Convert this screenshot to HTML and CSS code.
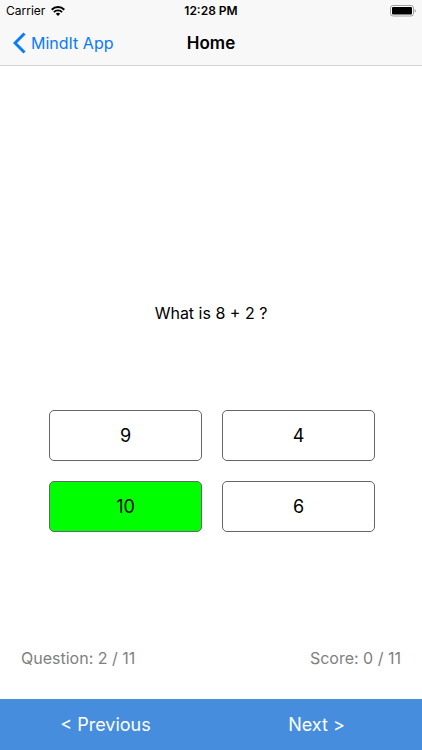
FILE: index.html
```html
<!DOCTYPE html>
<html lang="en">
<head>
<meta charset="utf-8">
<meta name="viewport" content="width=device-width, initial-scale=1">
<title>Home</title>
<link rel="stylesheet" href="styles.css">
</head>
<body>
<header class="top">
  <div class="status">
    <div class="carrier">
      <span>Carrier</span>
      <svg width="14" height="10" viewBox="0 0 14 10" aria-hidden="true">
        <path d="M0.7 3.7a8.7 8.7 0 0 1 12.6 0" fill="none" stroke="#000" stroke-width="2"/>
        <path d="M2.9 6.1a5.7 5.7 0 0 1 8.2 0" fill="none" stroke="#000" stroke-width="1.9"/>
        <path d="M7 10L4.8 7.8a3.1 3.1 0 0 1 4.4 0z"/>
      </svg>
    </div>
    <time class="clock">12:28 PM</time>
    <svg class="battery" width="26" height="12" viewBox="0 0 26 12" aria-hidden="true">
      <rect x="0.5" y="0.5" width="23" height="10.5" rx="2.5" fill="#fff" stroke="#a0a0a0"/>
      <rect x="2" y="2" width="20" height="7.5" rx="1"/>
      <path d="M24.6 4a1.9 1.9 0 0 1 0 3.6z" fill="#a0a0a0"/>
    </svg>
  </div>
  <nav class="nav">
    <a class="back" href="#">
      <svg width="13" height="22" viewBox="0 0 13 22" aria-hidden="true">
        <path d="M11.5 1.5L2 11l9.5 9.5" fill="none" stroke="currentColor" stroke-width="3"/>
      </svg>
      <span>MindIt App</span>
    </a>
    <h1 class="title">Home</h1>
  </nav>
</header>
<main class="quiz">
  <p class="question">What is 8 + 2 ?</p>
  <div class="answers">
    <button class="answer" type="button">9</button>
    <button class="answer" type="button">4</button>
    <button class="answer correct" type="button">10</button>
    <button class="answer" type="button">6</button>
  </div>
  <div class="stats">
    <span>Question: 2 / 11</span>
    <span>Score: 0 / 11</span>
  </div>
</main>
<footer class="pager">
  <button class="page" type="button">&lt; Previous</button>
  <button class="page" type="button">Next &gt;</button>
</footer>
</body>
</html>
```
FILE: styles.css
```css
* {
  box-sizing: border-box;
}

body {
  margin: 0;
  min-height: 100vh;
  display: flex;
  flex-direction: column;
  background: #fff;
  color: #000;
  font-family: Inter, "Liberation Sans", sans-serif;
  font-size: 16px;
  line-height: 22px;
}

button {
  margin: 0;
  padding: 0;
  font: inherit;
  color: inherit;
}

.top {
  background: #f8f8f8;
  border-bottom: 1px solid #d4d4d4;
}

.status,
.nav {
  display: grid;
  grid-template-columns: 1fr auto 1fr;
  align-items: center;
}

.status {
  height: 22px;
  padding: 0 6px;
  font-size: 12px;
}

.carrier {
  display: flex;
  align-items: center;
  gap: 6px;
}

.clock {
  font-weight: 600;
}

.battery {
  justify-self: end;
}

.nav {
  height: 43px;
  padding: 0 13px 1px;
}

.back {
  display: flex;
  align-items: center;
  gap: 5px;
  color: #0a7aff;
  text-decoration: none;
}

.title {
  margin: 0;
  font-size: 17px;
  font-weight: 600;
}

.quiz {
  flex: 1;
  display: flex;
  flex-direction: column;
}

.question {
  flex: 1;
  display: flex;
  align-items: flex-end;
  justify-content: center;
  margin: 0;
  padding-bottom: 86px;
}

.answers {
  display: grid;
  grid-template-columns: 1fr 1fr;
  gap: 20px;
  padding: 0 47px 0 49px;
}

.answer {
  height: 51px;
  background: #fff;
  border: 1px solid #666;
  border-radius: 5px;
  font-size: 18px;
}

.correct {
  background: #0f0;
}

.stats {
  display: flex;
  justify-content: space-between;
  padding: 115px 21px 30px;
  color: #808080;
}

.pager {
  display: grid;
  grid-template-columns: 1fr 1fr;
  background: #468edd;
  color: #fff;
}

.page {
  height: 51px;
  background: none;
  border: 0;
  font-size: 18px;
}
```
